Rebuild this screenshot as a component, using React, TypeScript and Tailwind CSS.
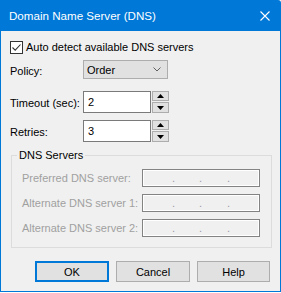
import React from "react";

function Spinner() {
  return (
    <div className="ml-px flex w-[17px] flex-col gap-px">
      <div className="flex h-[10px] items-center justify-center border border-[#adadad] bg-[#e1e1e1]">
        <svg width="7" height="4" viewBox="0 0 7 4"><path d="M0 4 L3.5 0 L7 4 Z" fill="#000" /></svg>
      </div>
      <div className="flex h-[11px] items-center justify-center border border-[#adadad] bg-[#e1e1e1]">
        <svg width="7" height="4" viewBox="0 0 7 4"><path d="M0 0 L7 0 L3.5 4 Z" fill="#000" /></svg>
      </div>
    </div>
  );
}

function NumRow({ label, value, mt }: { label: string; value: string; mt: string }) {
  return (
    <div className={`ml-[9px] flex h-[22px] items-center ${mt}`}>
      <div className="w-[73px] whitespace-nowrap pt-[1px]">{label}</div>
      <div className="flex h-[22px] w-[68px] items-center border border-[#7a7a7a] bg-white pl-[4px]">{value}</div>
      <Spinner />
    </div>
  );
}

function IpRow({ label, mt }: { label: string; mt: string }) {
  return (
    <div className={`ml-[5px] flex h-[18px] items-center ${mt}`}>
      <div className="w-[120px] whitespace-nowrap text-[#a0a0a0]">{label}</div>
      <div className="relative h-[18px] w-[118px] border border-[#838383] shadow-[inset_0_0_0_1px_#ffffff]">
        <span className="absolute left-[29px] top-[0px] text-[#9a9aa8]">.</span>
        <span className="absolute left-[56px] top-[0px] text-[#9a9aa8]">.</span>
        <span className="absolute left-[84px] top-[0px] text-[#9a9aa8]">.</span>
      </div>
    </div>
  );
}

export default function App() {
  return (
    <div className="h-[293px] w-[281px] bg-white text-[11px] leading-[16px] text-black [font-family:'Liberation_Sans',Arial,sans-serif]">
      <div className="flex h-[292px] w-[281px] flex-col">
        <div className="flex h-[31px] items-center justify-between rounded-tr-[3px] bg-[#0078d7] pl-[9px] pr-[11px] text-[11.6px] text-white">
          <span className="whitespace-nowrap">Domain Name Server (DNS)</span>
          <svg width="10" height="10" viewBox="0 0 10 10">
            <path d="M0.5 0.5 L9.5 9.5 M9.5 0.5 L0.5 9.5" stroke="#fff" strokeWidth="1.1" />
          </svg>
        </div>
        <div className="flex flex-1 flex-col border-x border-b border-[#0078d7] bg-[#f0f0f0]">
          <div className="ml-[9px] mt-[6px] flex h-[20px] items-center gap-[3px]">
            <div className="flex h-[13px] w-[13px] items-center justify-center border border-[#333333] bg-white">
              <svg width="11" height="11" viewBox="0 0 11 11">
                <path d="M1.5 5.5 L4.2 8.2 L9.5 2.5" stroke="#333" strokeWidth="1.1" fill="none" />
              </svg>
            </div>
            <span className="whitespace-nowrap">Auto detect available DNS servers</span>
          </div>

          <div className="ml-[9px] mt-[3px] flex h-[19px] items-center">
            <div className="w-[73px] pt-[2px]">Policy:</div>
            <div className="flex h-[19px] w-[85px] items-center justify-between border border-[#adadad] bg-[#e1e1e1] pl-[3px] pr-[6px]">
              <span>Order</span>
              <svg width="8" height="5" viewBox="0 0 8 5">
                <path d="M0.5 0.5 L4 4 L7.5 0.5" stroke="#606060" strokeWidth="1" fill="none" />
              </svg>
            </div>
          </div>

          <NumRow label="Timeout (sec):" value="2" mt="mt-[12px]" />
          <NumRow label="Retries:" value="3" mt="mt-[7px]" />

          <fieldset className="ml-[10px] mt-[5px] w-[261px] border border-[#dcdcdc] px-[5px] pb-[10px]">
            <legend className="whitespace-nowrap px-[2px] leading-[16px]">DNS Servers</legend>
            <IpRow label="Preferred DNS server:" mt="mt-[6px]" />
            <IpRow label="Alternate DNS server 1:" mt="mt-[7px]" />
            <IpRow label="Alternate DNS server 2:" mt="mt-[7px]" />
          </fieldset>

          <div className="ml-[34px] mt-[13px] flex gap-[7px]">
            <button className="flex h-[21px] w-[74px] items-center justify-center border-2 border-[#0078d7] bg-[#e1e1e1]">OK</button>
            <button className="flex h-[21px] w-[74px] items-center justify-center border border-[#adadad] bg-[#e1e1e1]">Cancel</button>
            <button className="flex h-[21px] w-[73px] items-center justify-center border border-[#adadad] bg-[#e1e1e1]">Help</button>
          </div>
        </div>
      </div>
    </div>
  );
}
